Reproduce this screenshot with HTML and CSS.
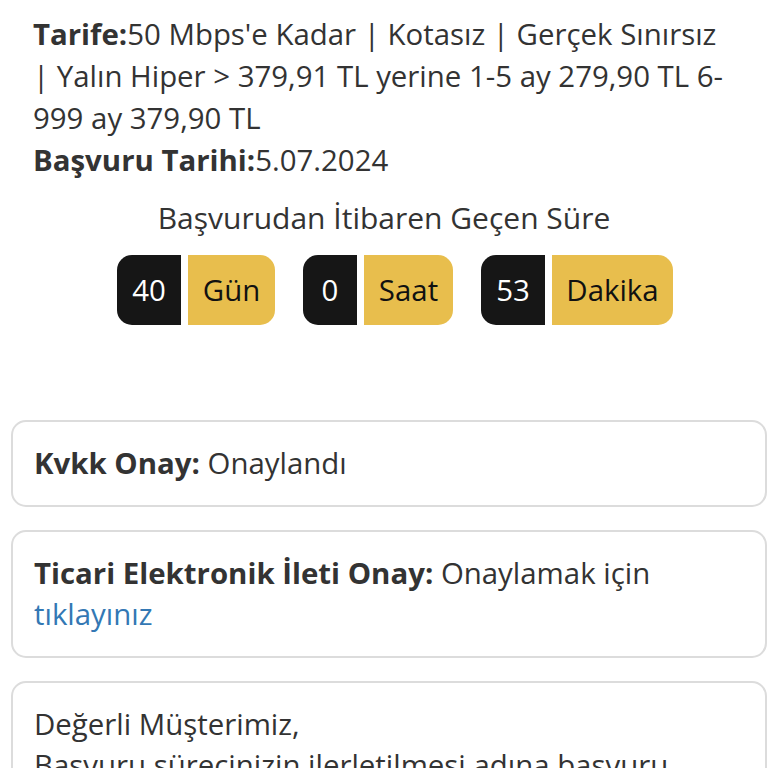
FILE: index.html
```html
<!DOCTYPE html>
<html lang="tr">
<head>
<meta charset="utf-8">
<link rel="stylesheet" href="styles.css">
</head>
<body>
<div class="page">
  <div class="info">
    <p><b>Tarife:</b>50 Mbps'e Kadar | Kotasız | Gerçek Sınırsız | Yalın Hiper &gt; 379,91 TL yerine 1-5 ay 279,90 TL 6-999 ay 379,90 TL</p>
    <p><b>Başvuru Tarihi:</b>5.07.2024</p>
  </div>
  <h2 class="timer-title">Başvurudan İtibaren Geçen Süre</h2>
  <div class="timer">
    <div class="unit"><span class="num n1">40</span><span class="lbl l1">Gün</span></div>
    <div class="unit"><span class="num n2">0</span><span class="lbl l2">Saat</span></div>
    <div class="unit"><span class="num n3">53</span><span class="lbl l3">Dakika</span></div>
  </div>
  <div class="cards">
    <div class="card"><b>Kvkk Onay:</b> Onaylandı</div>
    <div class="card"><b>Ticari Elektronik İleti Onay:</b> Onaylamak için <a href="#">tıklayınız</a></div>
    <div class="card">Değerli Müşterimiz,<br>Başvuru sürecinizin ilerletilmesi adına başvuru</div>
  </div>
</div>
</body>
</html>
```
FILE: styles.css
```css
* { box-sizing: border-box; }
html, body { margin: 0; padding: 0; background: #fff; overflow: hidden; }
body {
  font-family: "Open Sans", "Noto Sans", sans-serif;
  color: #333;
  font-size: 29.4px;
  line-height: 42px;
}
.page { width: 768px; }
.info { padding: 13px 38px 0 33px; }
.info p { margin: 0; }
.info b { font-weight: 700; }
.timer-title {
  margin: 16px 0 0;
  font-size: 30px;
  font-weight: 400;
  line-height: 42px;
  text-align: center;
}
.timer {
  display: flex;
  justify-content: center;
  gap: 28px;
  margin-top: 16px;
  padding-left: 22px;
}
.unit { display: flex; gap: 7px; height: 70px; }
.num, .lbl {
  display: flex;
  align-items: center;
  justify-content: center;
  height: 70px;
  font-size: 29.4px;
}
.num { background: #161616; color: #fff; border-radius: 15px 0 0 15px; }
.lbl { background: #e8be4d; color: #111; border-radius: 0 15px 15px 0; }
.n1 { width: 64px; } .l1 { width: 87px; }
.n2 { width: 54px; } .l2 { width: 89px; }
.n3 { width: 64px; } .l3 { width: 121px; }
.cards {
  display: flex;
  flex-direction: column;
  gap: 23px;
  margin-top: 95px;
  padding-left: 11px;
  padding-right: 1px;
}
.card {
  border: 2px solid #dcdcdc;
  border-radius: 15px;
  padding: 21px 21px;
  line-height: 41px;
}
.card a { color: #3378b4; text-decoration: none; }
```
